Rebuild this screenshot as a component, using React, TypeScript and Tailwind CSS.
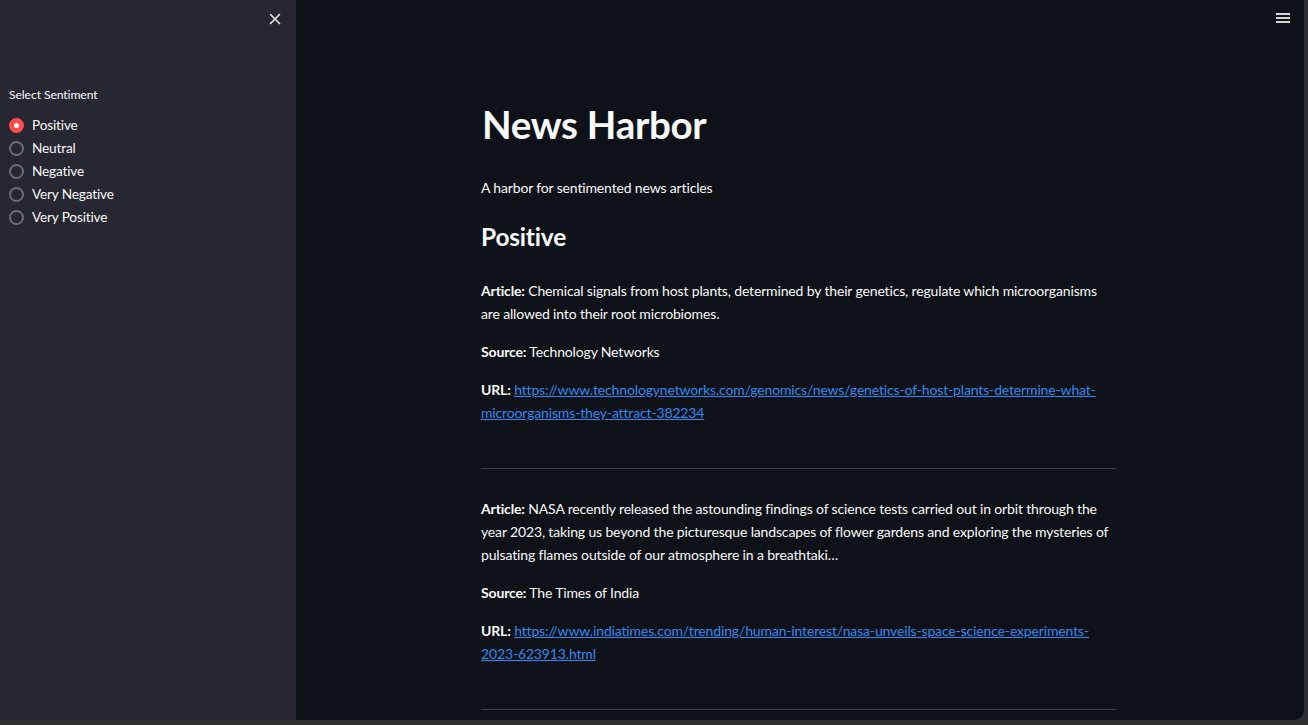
import React, { useState } from 'react';

const options = ['Positive', 'Neutral', 'Negative', 'Very Negative', 'Very Positive'];

const articles = [
  {
    text: 'Chemical signals from host plants, determined by their genetics, regulate which microorganisms are allowed into their root microbiomes.',
    source: 'Technology Networks',
    url: 'https://www.technologynetworks.com/genomics/news/genetics-of-host-plants-determine-what-microorganisms-they-attract-382234',
  },
  {
    text: 'NASA recently released the astounding findings of science tests carried out in orbit through the year 2023, taking us beyond the picturesque landscapes of flower gardens and exploring the mysteries of pulsating flames outside of our atmosphere in a breathtaki…',
    source: 'The Times of India',
    url: 'https://www.indiatimes.com/trending/human-interest/nasa-unveils-space-science-experiments-2023-623913.html',
  },
];

export default function App() {
  const [selected, setSelected] = useState('Positive');

  return (
    <div
      className="w-[1308px] h-[725px] bg-[#2f2f31] overflow-hidden text-[#fafafa]"
      style={{ fontFamily: 'Lato, "Noto Sans", sans-serif' }}
    >
      <div className="flex w-[1304px] h-[720px] rounded-br-[10px] overflow-hidden">
        {/* sidebar */}
        <aside className="w-[296px] shrink-0 bg-[#262730] relative">
          <button className="absolute left-[269px] top-[13px] w-[12px] h-[12px] text-[#e6e6e6]">
            <svg viewBox="0 0 12 12" width="12" height="12" fill="none" stroke="currentColor" strokeWidth="1.6" strokeLinecap="round">
              <path d="M1.5 1.5l9 9M10.5 1.5l-9 9" />
            </svg>
          </button>
          <div className="pt-[86px] pl-[9px]">
            <div className="text-[12.2px] leading-[18px] tracking-[-0.1px] mb-[10px]">Select Sentiment</div>
            <div className="flex flex-col">
              {options.map(opt => {
                const on = opt === selected;
                return (
                  <label
                    key={opt}
                    onClick={() => setSelected(opt)}
                    className="flex items-center h-[23px] gap-[8px] cursor-pointer"
                  >
                    {on ? (
                      <span className="w-[15px] h-[15px] rounded-full bg-[#ff4b4b] flex items-center justify-center">
                        <span className="w-[5px] h-[5px] rounded-full bg-white" />
                      </span>
                    ) : (
                      <span className="w-[15px] h-[15px] rounded-full border-2 border-[#6c6d74]" />
                    )}
                    <span className="text-[13.6px] tracking-[-0.15px]">{opt}</span>
                  </label>
                );
              })}
            </div>
          </div>
        </aside>

        {/* main */}
        <main className="flex-1 bg-[#0e1117] relative overflow-hidden">
          <button className="absolute left-[980px] top-[12px] w-[14px] h-[12px] flex flex-col justify-between py-[1px]">
            <span className="block h-[2px] w-full bg-[#d6d6d9]" />
            <span className="block h-[2px] w-full bg-[#d6d6d9]" />
            <span className="block h-[2px] w-full bg-[#d6d6d9]" />
          </button>

          <div className="w-[635px] ml-[185px] pt-[100px] text-[14px] leading-[23px] tracking-[-0.15px] flex flex-col">
            <h1 className="pl-[1px] text-[38.5px] leading-[48px] font-bold tracking-[-0.3px]">News Harbor</h1>
            <p className="mt-[28px]">A harbor for sentimented news articles</p>
            <h2 className="mt-[20px] text-[24.5px] leading-[36px] font-bold tracking-[-0.2px]">{selected}</h2>

            <div className="mt-[24px] flex flex-col">
              {articles.map((a, i) => (
                <div key={i} className="flex flex-col">
                  <div className="flex flex-col gap-[15px]">
                    <p>
                      <b>Article:</b> {a.text}
                    </p>
                    <p>
                      <b>Source:</b> {a.source}
                    </p>
                    <p>
                      <b>URL:</b>{' '}
                      <a href="#" className="text-[#2b8bf2] underline break-words">
                        {a.url}
                      </a>
                    </p>
                  </div>
                  <hr className="mt-[44px] mb-[28px] border-0 border-t border-[#3d3f45]" />
                </div>
              ))}
            </div>
          </div>
        </main>
      </div>
    </div>
  );
}
